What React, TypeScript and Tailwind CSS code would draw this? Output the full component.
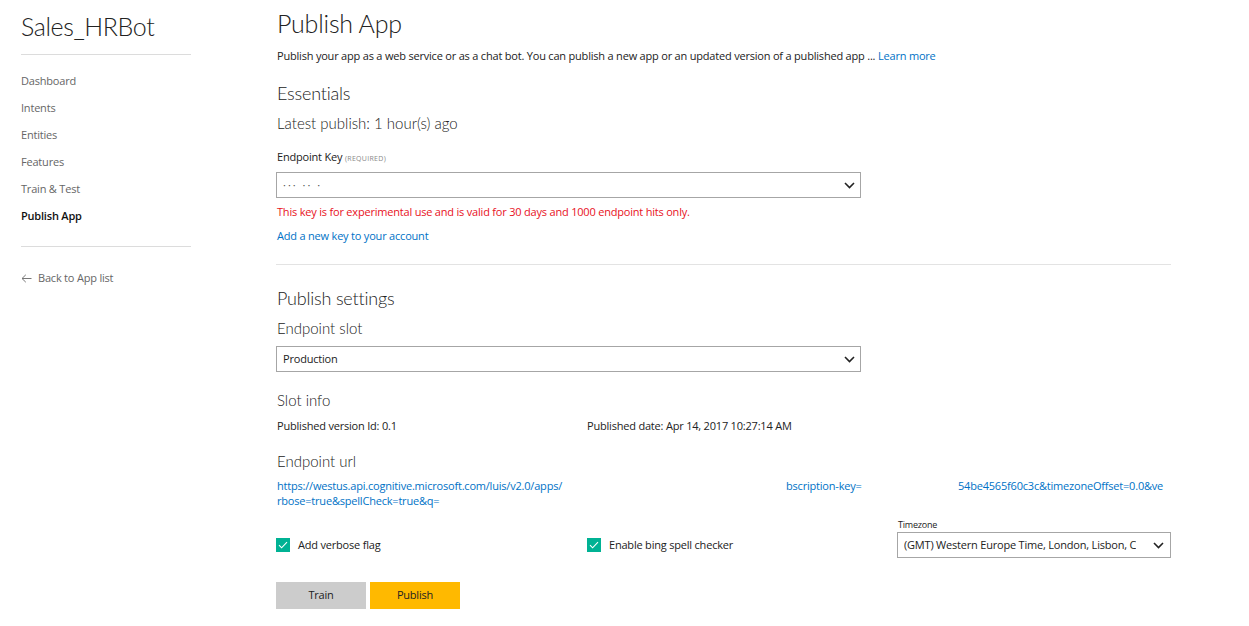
import React from "react";

const Chevron = () => (
  <svg width="11" height="7" viewBox="0 0 11 7" fill="none">
    <path d="M1 1l4.5 4.5L10 1" stroke="#222" strokeWidth="1.6" />
  </svg>
);

const Check = () => (
  <span className="flex h-[14px] w-[14px] items-center justify-center bg-[#00b294]">
    <svg width="10" height="8" viewBox="0 0 10 8" fill="none">
      <path d="M1 4.2l2.6 2.6L9 1.2" stroke="#fff" strokeWidth="1.1" />
    </svg>
  </span>
);

const Select = ({ children, className = "" }: { children: React.ReactNode; className?: string }) => (
  <div className={`flex h-[26px] items-center justify-between border border-[#a6a6a6] bg-white pl-[6px] pr-[5px] ${className}`}>
    <div className="overflow-hidden whitespace-nowrap text-[11px] text-[#222]">{children}</div>
    <Chevron />
  </div>
);

const light = "font-['Lato_Light','Lato',sans-serif] font-light";

export default function App() {
  const nav = ["Dashboard", "Intents", "Entities", "Features", "Train & Test"];
  return (
    <div className="flex min-h-[626px] w-[1249px] bg-white font-['Open_Sans',sans-serif] tracking-[-0.2px] text-[#222]">
      <aside className="w-[276px] shrink-0 pl-[21px]">
        <div className="w-[170px]">
          <div className={`mt-[11px] text-[25px] leading-[30px] tracking-[-0.4px] text-[#222] ${light}`}>Sales_HRBot</div>
          <div className="mt-[13px] border-t border-[#dcdcdc]" />
          <nav className="mt-[12px] flex flex-col">
            {nav.map((n) => (
              <div key={n} className="h-[27px] text-[11px] leading-[27px] text-[#666]">{n}</div>
            ))}
            <div className="h-[27px] text-[11px] font-semibold leading-[27px] text-[#111]">Publish App</div>
          </nav>
          <div className="mt-[17px] border-t border-[#dcdcdc]" />
          <div className="mt-[23px] flex items-center gap-[6px] text-[11px] leading-[16px] text-[#666]">
            <svg width="11" height="9" viewBox="0 0 11 9" fill="none">
              <path d="M10.5 4.5H1M4.8 0.8L1 4.5l3.8 3.7" stroke="#777" strokeWidth="1" />
            </svg>
            <span>Back to App list</span>
          </div>
        </div>
      </aside>

      <main className="w-[895px] shrink-0 pl-[1px]">
        <h1 className={`mt-[8px] text-[25px] leading-[30px] tracking-[-0.2px] ${light}`}>Publish App</h1>
        <p className="mt-[10px] text-[11px] leading-[16px]">
          Publish your app as a web service or as a chat bot. You can publish a new app or an updated version of a published app ...{" "}
          <span className="text-[#0072c6]">Learn more</span>
        </p>

        <h2 className={`mt-[17px] text-[18px] leading-[24px] tracking-[-0.2px] ${light}`}>Essentials</h2>
        <div className={`mt-[8px] text-[15px] leading-[20px] tracking-normal ${light}`}>Latest publish: 1 hour(s) ago</div>

        <div className="mt-[16px] text-[11px] leading-[16px]">
          Endpoint Key <span className="text-[7px] uppercase tracking-[0.3px] text-[#888]">(Required)</span>
        </div>
        <Select className="-ml-[1px] mt-[5px] w-[585px]">
          <span className="text-[#555] tracking-[2px]">··· ·· ·</span>
        </Select>
        <div className="mt-[6px] text-[11px] leading-[16px] text-[#e81123]">
          This key is for experimental use and is valid for 30 days and 1000 endpoint hits only.
        </div>
        <div className="mt-[8px] text-[11px] leading-[16px] text-[#0072c6]">Add a new key to your account</div>

        <div className="-ml-[1px] mt-[20px] border-t border-[#e3e3e3]" />

        <h2 className={`mt-[21px] text-[18px] leading-[24px] tracking-[-0.2px] ${light}`}>Publish settings</h2>
        <div className={`mt-[8px] text-[15px] leading-[20px] tracking-normal ${light}`}>Endpoint slot</div>
        <Select className="-ml-[1px] mt-[8px] w-[585px]">Production</Select>

        <div className={`mt-[18px] text-[15px] leading-[20px] tracking-normal ${light}`}>Slot info</div>
        <div className="mt-[8px] grid grid-cols-[310px_310px] text-[11px] leading-[16px]">
          <div>Published version Id: 0.1</div>
          <div>Published date: Apr 14, 2017 10:27:14 AM</div>
        </div>

        <div className={`mt-[17px] text-[15px] leading-[20px] tracking-normal ${light}`}>Endpoint url</div>
        <div className="mt-[7px] text-[11px] leading-[15px] text-[#0072c6]">
          <div className="flex whitespace-nowrap">
            <span className="w-[509px] overflow-hidden">https://westus.api.cognitive.microsoft.com/luis/v2.0/apps/</span>
            <span className="w-[81px] overflow-hidden">bscription-key=</span>
            <span className="w-[91px]" />
            <span>54be4565f60c3c&amp;timezoneOffset=0.0&amp;ve</span>
          </div>
          <div>rbose=true&amp;spellCheck=true&amp;q=</div>
        </div>

        <div className="-ml-[1px] mt-[11px] grid grid-cols-[311px_310px_274px] items-end">
          <label className="flex h-[26px] items-center gap-[8px] text-[11px]">
            <Check />
            <span>Add verbose flag</span>
          </label>
          <label className="flex h-[26px] items-center gap-[8px] text-[11px]">
            <Check />
            <span>Enable bing spell checker</span>
          </label>
          <div>
            <div className="pl-[1px] text-[9px] leading-[12px]">Timezone</div>
            <Select className="mt-[1px] w-[274px] pr-[6px]">(GMT) Western Europe Time, London, Lisbon, C</Select>
          </div>
        </div>

        <div className="-ml-[1px] mt-[24px] flex gap-[4px]">
          <button className="h-[27px] w-[90px] bg-[#cccccc] text-[11px] text-[#222]">Train</button>
          <button className="h-[27px] w-[90px] bg-[#ffb900] text-[11px] text-[#222]">Publish</button>
        </div>
      </main>
    </div>
  );
}
